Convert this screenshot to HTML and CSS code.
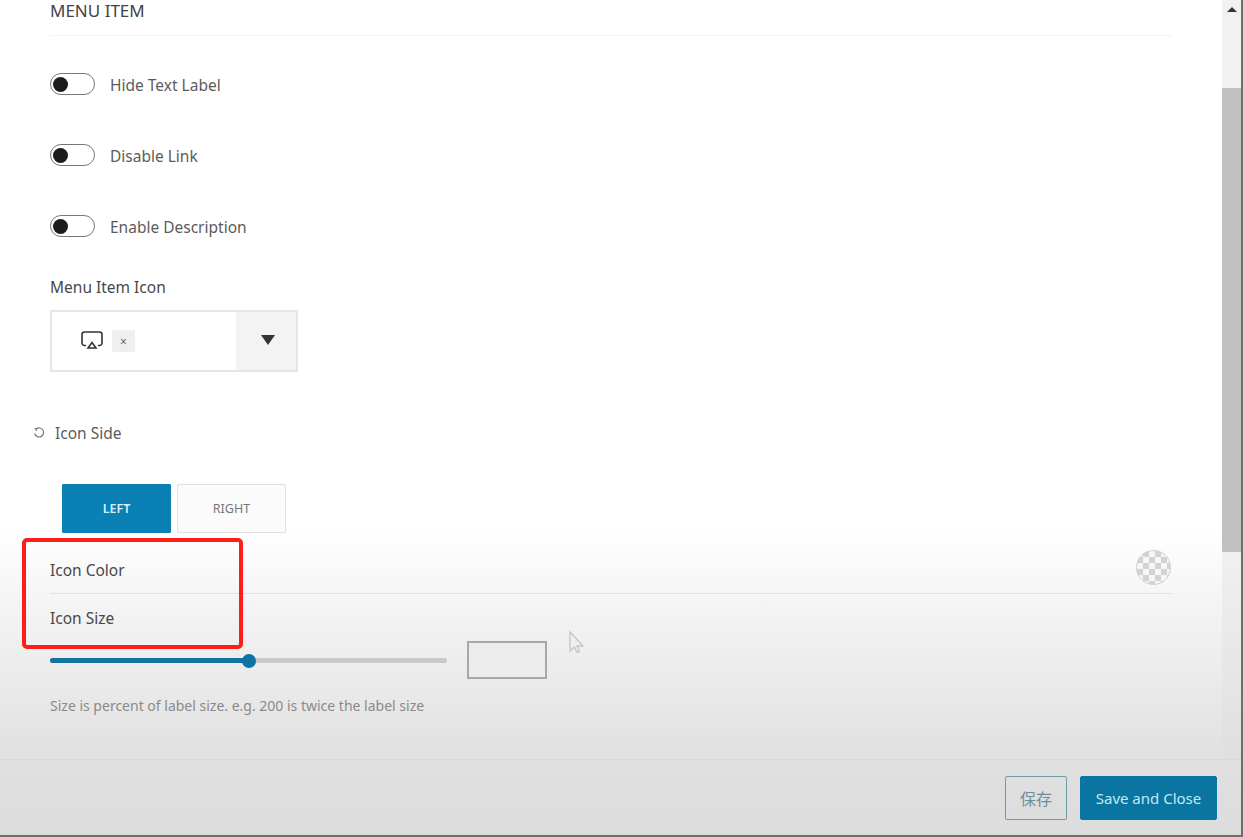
FILE: index.html
```html
<!DOCTYPE html>
<html lang="en">
<head>
    <meta charset="UTF-8">
    <meta name="viewport" content="width=device-width, initial-scale=1.0">
    <title>Menu Item</title>
    <link rel="stylesheet" href="styles.css">
</head>
<body>
    <div class="modal">
        <div class="modal-body">
            <div class="content">
                <h2 class="section-title">MENU ITEM</h2>

                <div class="toggle-row">
                    <span class="toggle"></span>
                    <span class="toggle-label">Hide Text Label</span>
                </div>
                <div class="toggle-row">
                    <span class="toggle"></span>
                    <span class="toggle-label">Disable Link</span>
                </div>
                <div class="toggle-row">
                    <span class="toggle"></span>
                    <span class="toggle-label">Enable Description</span>
                </div>

                <div class="field-label">Menu Item Icon</div>
                <div class="select">
                    <div class="select-value">
                        <svg class="airplay" width="24" height="20" viewBox="0 0 24 20" fill="none" stroke="#333" stroke-width="1.6">
                            <path d="M6 15.5H4.5A2.5 2.5 0 0 1 2 13V4.5A2.5 2.5 0 0 1 4.5 2h15A2.5 2.5 0 0 1 22 4.500V13a2.500 2.500 0 0 1-2.500 2.500H18"/>
                            <path d="M12 12.500L16 18H8z"/>
                        </svg>
                        <span class="tag-remove">×</span>
                    </div>
                    <div class="select-arrow"><span class="arrow-down"></span></div>
                </div>

                <div class="side-label">
                    <svg width="12" height="12" viewBox="0 0 12 12" fill="none" stroke="#777" stroke-width="1.2">
                        <path d="M3 2.200A4.500 4.500 0 1 1 1.700 6.500"/>
                        <path d="M1.500 1.500L3.500 1.800L3.200 4"/>
                    </svg>
                    <span>Icon Side</span>
                </div>
                <div class="side-buttons">
                    <button class="side-btn side-btn-active">LEFT</button>
                    <button class="side-btn">RIGHT</button>
                </div>

                <div class="color-row">
                    <span>Icon Color</span>
                    <span class="swatch"></span>
                </div>
                <div class="size-label">Icon Size</div>
                <div class="slider-row">
                    <div class="slider">
                        <div class="slider-fill"></div>
                        <div class="slider-thumb"></div>
                    </div>
                    <div class="number-input"></div>
                </div>
                <p class="help">Size is percent of label size. e.g. 200 is twice the label size</p>
            </div>
            <div class="scrollbar">
                <div class="scroll-up"><span class="arrow-up"></span></div>
                <div class="scroll-thumb"></div>
            </div>
        </div>
        <div class="modal-footer">
            <button class="btn-save">保存</button>
            <button class="btn-close">Save and Close</button>
        </div>
    </div>

    <div class="highlight"></div>
    <svg class="cursor" width="18" height="26" viewBox="0 0 18 26" fill="none" stroke="#c4c4c4" stroke-width="1.300">
        <path d="M2 2V21L6.500 17L9 22.500L11.500 21.500L9 16H15z"/>
    </svg>
</body>
</html>
```

FILE: styles.css
```css
* {
    box-sizing: border-box;
}
html, body {
    margin: 0;
    height: 100%;
    overflow: hidden;
}
body {
    font-family: "Noto Sans", "Noto Sans CJK SC", Arial, sans-serif;
    font-size: 15.5px;
    color: #555;
    background: #fff;
}
.modal {
    height: 837px;
    display: flex;
    flex-direction: column;
    border-right: 2px solid #6e6e6e;
    border-bottom: 2px solid #6e6e6e;
    background: linear-gradient(to bottom, #fff 0, #fff 530px, #f6f6f6 590px, #e8e8e8 700px, #e0e0e0 760px, #dcdcdc 100%);
}
.modal-body {
    height: 760px;
    display: flex;
    border-bottom: 1px solid #d8d8d8;
}
.content {
    flex: 1;
    padding: 0 50px;
}
.section-title {
    margin: 0;
    height: 36px;
    padding-bottom: 14px;
    width: 1122px;
    font-size: 17px;
    font-weight: 400;
    line-height: 21px;
    color: #444;
    border-bottom: 1px solid #f4f4f4;
}
.toggle-row {
    display: flex;
    align-items: center;
    height: 22px;
    margin-top: 37px;
    gap: 15px;
}
.toggle-row + .toggle-row {
    margin-top: 49px;
}
.toggle {
    width: 45px;
    height: 22px;
    border: 1.500px solid #777;
    border-radius: 11px;
    display: flex;
    align-items: center;
    padding-left: 2px;
}
.toggle::before {
    content: "";
    width: 15px;
    height: 15px;
    border-radius: 50%;
    background: #1c1c1c;
}
.toggle-label {
    margin-top: 2px;
    color: #5c5c5c;
}
.field-label {
    margin-top: 39px;
    height: 22px;
    line-height: 22px;
    color: #484848;
}
.select {
    display: flex;
    width: 248px;
    height: 62px;
    margin-top: 12px;
    border: 2px solid #e6e6e6;
}
.select-value {
    flex: 1;
    display: flex;
    align-items: center;
    padding-left: 28px;
    gap: 8px;
}
.airplay {
    margin-top: -2px;
}
.tag-remove {
    width: 23px;
    height: 22px;
    background: #efefef;
    color: #666;
    font-size: 12px;
    line-height: 24px;
    text-align: center;
}
.select-arrow {
    width: 60px;
    background: #f3f3f3;
    display: flex;
    align-items: center;
    justify-content: center;
    padding-left: 4px;
}
.arrow-down {
    margin-top: -2px;
    border-left: 7px solid transparent;
    border-right: 7px solid transparent;
    border-top: 10px solid #333;
}
.side-label {
    display: flex;
    align-items: center;
    gap: 10px;
    height: 22px;
    margin: 50px 0 0 -17px;
    color: #5c5c5c;
}
.side-buttons {
    display: flex;
    gap: 6px;
    margin: 40px 0 0 12px;
}
.side-btn {
    width: 109px;
    height: 49px;
    border: 1px solid #e0e0e0;
    background: #fbfbfb;
    color: #777;
    font-family: inherit;
    font-size: 12.500px;
    border-radius: 1px;
}
.side-btn-active {
    background: #0a80b4;
    border-color: #0a80b4;
    color: #d5f0fb;
    font-weight: 600;
}
.color-row {
    display: flex;
    align-items: center;
    justify-content: space-between;
    width: 1122px;
    height: 61px;
    padding: 14px 1px 0 0;
    border-bottom: 1px solid #e2e2e2;
    color: #484848;
}
.swatch {
    width: 35px;
    height: 35px;
    margin-top: -6px;
    border-radius: 50%;
    border: 1px solid #d0d0d0;
    background-color: #f6f6f6;
    background-image: conic-gradient(#d2d2d2 25%, transparent 0 50%, #d2d2d2 0 75%, transparent 0);
    background-size: 12px 12px;
}
.size-label {
    height: 22px;
    margin-top: 13px;
    line-height: 22px;
    color: #484848;
}
.slider-row {
    display: flex;
    align-items: center;
    gap: 20px;
    margin-top: 12px;
}
.slider {
    position: relative;
    width: 397px;
    height: 5px;
    border-radius: 3px;
    background: #c9c9c9;
}
.slider-fill {
    width: 199px;
    height: 100%;
    border-radius: 3px;
    background: #14739f;
}
.slider-thumb {
    position: absolute;
    left: 192px;
    top: -4px;
    width: 14px;
    height: 14px;
    border-radius: 50%;
    background: #0e74a6;
}
.number-input {
    width: 80px;
    height: 38px;
    border: 2px solid #a8a8a8;
    background: #ececec;
}
.help {
    margin: 17px 0 0;
    font-size: 14px;
    line-height: 20px;
    color: #8a8a8a;
}
.scrollbar {
    width: 19px;
    background: linear-gradient(to bottom, #f1f1f1, #f1f1f1 540px, #dfdfdf 100%);
}
.scroll-up {
    height: 88px;
    display: flex;
    justify-content: center;
    padding-top: 7px;
}
.arrow-up {
    width: 0;
    height: 0;
    border-left: 5px solid transparent;
    border-right: 5px solid transparent;
    border-bottom: 5px solid #333;
}
.scroll-thumb {
    height: 464px;
    background: #c0c0c0;
}
.modal-footer {
    flex: 1;
    display: flex;
    justify-content: flex-end;
    align-items: flex-start;
    gap: 13px;
    padding: 16px 24px 0 0;
}
.modal-footer button {
    height: 44px;
    font-family: inherit;
    font-size: 15px;
    border-radius: 2px;
}
.modal-footer .btn-save {
    width: 62px;
    background: transparent;
    border: 1.500px solid #6f9aa8;
    color: #6d8f9b;
    font-size: 16px;
}
.btn-close {
    width: 137px;
    background: #0a75a0;
    border: 1px solid #0a75a0;
    color: #c4e8f5;
}
.highlight {
    position: absolute;
    left: 22px;
    top: 538px;
    width: 221px;
    height: 111px;
    border: 4px solid #fb1f17;
    border-radius: 5px;
}
.cursor {
    position: absolute;
    left: 568px;
    top: 630px;
}
```
